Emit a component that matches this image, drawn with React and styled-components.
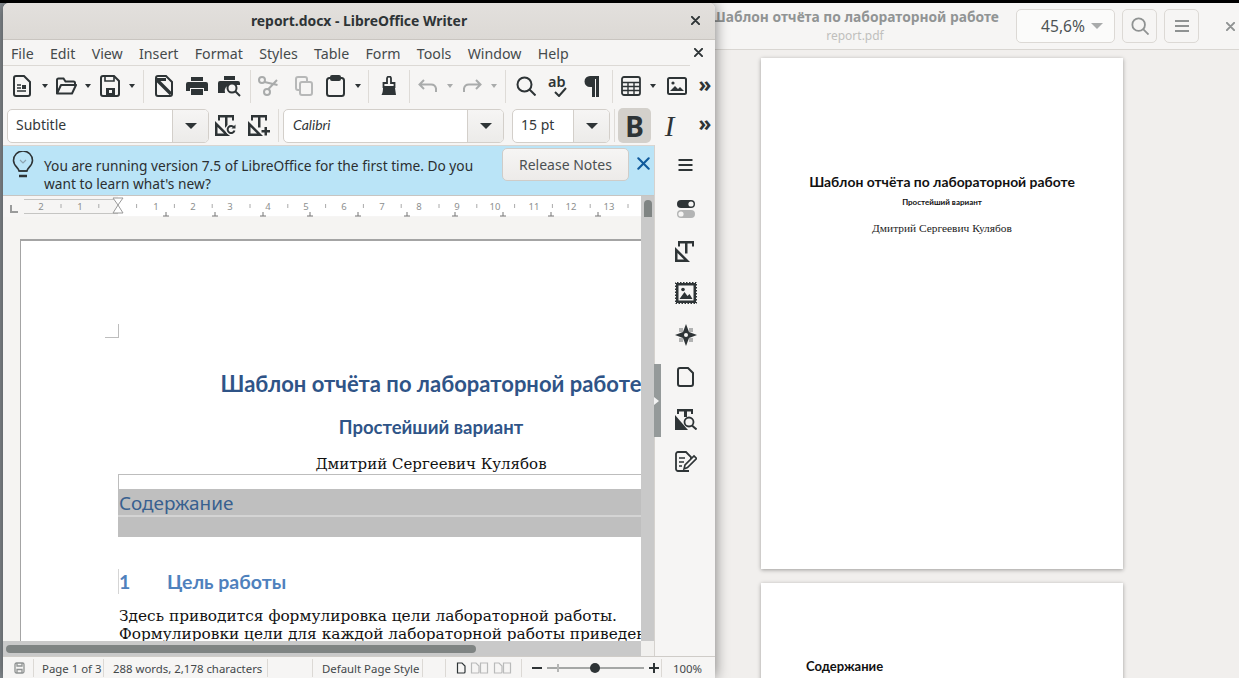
import React from "react"
import styled, { createGlobalStyle } from "styled-components"

const GlobalStyle = createGlobalStyle`
  html, body {
    margin: 0;
    padding: 0;
    height: 100%;
    background: #000;
    overflow: hidden;
  }
  * { box-sizing: border-box; }
`

const INK = "#2e3436"
const UI = `"Noto Sans", "Open Sans", sans-serif`
const SERIF = `"Liberation Serif", "DejaVu Serif", serif`
const SLAB = `"DejaVu Serif", "Liberation Serif", serif`
const HEAD = `Lato, "Noto Sans", sans-serif`

const Desktop = styled.div`
  position: relative;
  width: 1239px;
  height: 678px;
  overflow: hidden;
  background: linear-gradient(#000 3px, #8a9095 3px);
  font-family: ${UI};
`

/* ---------- pdf viewer (behind) ---------- */

const PdfWindow = styled.div`
  position: absolute;
  left: 700px;
  top: 3px;
  width: 539px;
  height: 675px;
  background: #f1efed;
  display: flex;
  flex-direction: column;
`
const PdfHeader = styled.div`
  height: 47px;
  flex: none;
  background: #f6f5f4;
  border-bottom: 1px solid #d9d6d2;
  display: flex;
  align-items: center;
  padding-left: 14px;
`
const PdfTitleBlock = styled.div`
  width: 282px;
  flex: none;
  margin-right: 20px;
  display: flex;
  flex-direction: column;
  align-items: center;
  white-space: nowrap;
`
const PdfTitle = styled.div`
  font-weight: 700;
  font-size: 13.8px;
  line-height: 18px;
  color: #919494;
`
const PdfSub = styled.div`
  font-size: 12px;
  line-height: 16px;
  margin-top: 2px;
  color: #c0bfbd;
`
const ZoomCombo = styled.div`
  width: 99px;
  height: 34px;
  flex: none;
  background: #fbfbfa;
  border: 1px solid #dcd9d5;
  border-radius: 5px;
  display: flex;
  align-items: center;
  justify-content: flex-end;
  gap: 6px;
  padding-right: 11px;
  font-size: 15.6px;
  color: #4e5355;
  margin-right: 7px;
`
const PdfButton = styled.div`
  width: 35px;
  height: 34px;
  flex: none;
  border: 1px solid #dcd9d5;
  border-radius: 5px;
  background: #f6f5f4;
  display: flex;
  align-items: center;
  justify-content: center;
  margin-right: 7px;
`
const PdfClose = styled.div`
  margin-left: 20px;
  display: flex;
`
const PdfPages = styled.div`
  flex: 1;
  display: flex;
  flex-direction: column;
  align-items: flex-start;
  gap: 14px;
  padding: 8px 0 0 61px;
  overflow: hidden;
`
const PdfPage = styled.div`
  width: 362px;
  height: 511px;
  flex: none;
  background: #fff;
  box-shadow: 0 1px 4px rgba(0, 0, 0, 0.35);
  display: flex;
  flex-direction: column;
  align-items: center;
  color: #111;
  padding-top: ${(p) => p.$top}px;
`
const PdfDocTitle = styled.div`
  font-family: ${HEAD};
  font-weight: 700;
  font-size: 13.9px;
  line-height: 18px;
  white-space: nowrap;
`
const PdfDocSub = styled.div`
  font-family: ${HEAD};
  font-weight: 700;
  font-size: 8px;
  line-height: 10px;
  margin-top: 6px;
  white-space: nowrap;
`
const PdfDocAuthor = styled.div`
  font-family: ${SERIF};
  font-size: 11.4px;
  line-height: 14px;
  margin-top: 14px;
  color: #222;
  white-space: nowrap;
`
const PdfTocTitle = styled.div`
  font-family: ${HEAD};
  font-weight: 700;
  font-size: 13px;
  line-height: 16px;
  align-self: flex-start;
  margin-left: 45px;
`

/* ---------- writer window ---------- */

const WriterWindow = styled.div`
  position: absolute;
  left: 3px;
  top: 3px;
  width: 712px;
  height: 675px;
  background: #f6f5f4;
  border-radius: 6px 6px 0 0;
  box-shadow: 0 0 14px rgba(0, 0, 0, 0.5);
  display: flex;
  flex-direction: column;
  overflow: hidden;
  color: ${INK};
`
const TitleBar = styled.div`
  height: 37px;
  flex: none;
  background: linear-gradient(#e3e0dd, #dcd9d5);
  border-bottom: 1px solid #c9c5c0;
  display: flex;
  align-items: center;
  justify-content: center;
  position: relative;
  font-weight: 700;
  font-size: 13.9px;
  padding-bottom: 2px;
`
const WindowClose = styled.div`
  position: absolute;
  right: 15px;
  top: 13px;
  display: flex;
`
const MenuBar = styled.div`
  height: 26px;
  flex: none;
  position: relative;
  display: flex;
  align-items: center;
  padding-left: 8px;
  gap: 16.3px;
  font-size: 14.2px;
  color: #454a4c;
  &::after {
    content: "";
    position: absolute;
    left: 0;
    bottom: 0;
    width: 687px;
    height: 1px;
    background: #dcd9d5;
  }
`
const MenuClose = styled.div`
  position: absolute;
  right: 12px;
  top: 8px;
  display: flex;
`
const ToolRow = styled.div`
  height: ${(p) => p.$h}px;
  flex: none;
  display: flex;
  align-items: center;
  padding-left: ${(p) => p.$pad}px;
`
const Cell = styled.div`
  width: ${(p) => p.$w}px;
  flex: none;
  display: flex;
  align-items: center;
  justify-content: center;
  margin-left: ${(p) => p.$ml || 0}px;
`
const Sep = styled.div`
  width: 1px;
  height: 33px;
  flex: none;
  background: #dedbd7;
  margin-left: ${(p) => p.$ml || 0}px;
`
const Drop = styled.div`
  width: 0;
  height: 0;
  border-left: 3.5px solid transparent;
  border-right: 3.5px solid transparent;
  border-top: 4px solid ${(p) => (p.$off ? "#a9abab" : INK)};
`
const BigDrop = styled(Drop)`
  border-left-width: 6px;
  border-right-width: 6px;
  border-top-width: 6px;
`
const Chevrons = styled.div`
  font-size: 21px;
  font-weight: 700;
  line-height: 17px;
  padding-bottom: 4px;
  color: ${INK};
`
const Combo = styled.div`
  width: ${(p) => p.$w}px;
  height: 34px;
  flex: none;
  margin-left: ${(p) => p.$ml || 0}px;
  display: flex;
  background: #fff;
  border: 1px solid #d3cfca;
  border-radius: 5px;
  overflow: hidden;
`
const ComboText = styled.div`
  flex: 1;
  display: flex;
  align-items: center;
  padding-left: ${(p) => p.$pad || 8}px;
  padding-bottom: 2px;
  font-size: 14px;
  font-style: ${(p) => (p.$italic ? "italic" : "normal")};
  font-family: ${(p) => (p.$italic ? "Lato, sans-serif" : UI)};
  color: #33383a;
`
const ComboBtn = styled.div`
  width: 36px;
  flex: none;
  background: linear-gradient(#f6f5f4, #ecebe9);
  border-left: 1px solid #d3cfca;
  display: flex;
  align-items: center;
  justify-content: center;
`
const BoldToggle = styled.div`
  width: 33px;
  height: 35px;
  flex: none;
  margin-left: 3px;
  background: #d3d0cb;
  border-radius: 5px;
  display: flex;
  align-items: center;
  justify-content: center;
  font-weight: 700;
  font-size: 28px;
  line-height: 28px;
`
const ItalicGlyph = styled.div`
  width: 37px;
  flex: none;
  text-align: center;
  font-family: ${SERIF};
  font-style: italic;
  font-size: 29px;
  line-height: 30px;
`
const WorkArea = styled.div`
  flex: 1;
  min-height: 0;
  display: flex;
`
const EditColumn = styled.div`
  width: 652px;
  flex: none;
  display: flex;
  flex-direction: column;
`
const InfoBar = styled.div`
  height: 51px;
  flex: none;
  background: #bae4f7;
  border-top: 1px solid #d9d6d2;
  border-bottom: 1px solid #c7c5c2;
  display: flex;
  align-items: flex-start;
  position: relative;
  padding: 5px 0 0 9px;
`
const InfoText = styled.div`
  width: 450px;
  margin: 6px 0 0 10px;
  font-size: 13.72px;
  line-height: 18px;
  color: #2b2f31;
`
const ReleaseBtn = styled.div`
  width: 127px;
  height: 33px;
  background: linear-gradient(#f6f5f4, #edebe9);
  border: 1px solid #cfccc8;
  border-radius: 5px;
  display: flex;
  align-items: center;
  justify-content: center;
  font-size: 14px;
  color: #4c5153;
  position: absolute;
  left: 499px;
  top: 2px;
`
const InfoClose = styled.div`
  position: absolute;
  right: 5px;
  top: 11px;
  display: flex;
`
const RulerRow = styled.div`
  height: 21px;
  flex: none;
  display: flex;
`
const RulerStrip = styled.div`
  width: 638px;
  flex: none;
  background: #f6f5f4;
  display: flex;
`
const ScrollTrack = styled.div`
  width: 14px;
  flex: none;
  background: #c9c9c9;
  position: relative;
`
const VThumb = styled.div`
  position: absolute;
  left: 3px;
  top: 4px;
  width: 8px;
  height: 51px;
  background: #7f8483;
  border-radius: 4px;
`
const DocRow = styled.div`
  flex: 1;
  min-height: 0;
  display: flex;
`
const DocPane = styled.div`
  width: 638px;
  flex: none;
  background: #f5f4f2;
  padding: 22px 0 0 17px;
  overflow: hidden;
`
const Page = styled.div`
  width: 820px;
  height: 900px;
  background: #fff;
  border-left: 1px solid #a4a4a4;
  border-top: 2px solid #a4a4a4;
  padding: 0 0 0 97px;
  position: relative;
`
const CropMark = styled.div`
  position: absolute;
  left: 84px;
  top: 83px;
  width: 14px;
  height: 14px;
  border-right: 1px solid #bdbdbd;
  border-bottom: 1px solid #bdbdbd;
`
const TextBlock = styled.div`
  width: 626px;
  padding-top: 129px;
`
const DocTitle = styled.div`
  font-family: ${HEAD};
  font-weight: 700;
  font-size: 22px;
  line-height: 28px;
  color: #2f5487;
  text-align: center;
  white-space: nowrap;
`
const DocSubtitle = styled.div`
  font-family: ${HEAD};
  font-weight: 700;
  font-size: 18.5px;
  line-height: 22px;
  color: #2f5487;
  text-align: center;
  margin-top: 18px;
`
const DocAuthor = styled.div`
  font-family: ${SLAB};
  font-size: 15px;
  line-height: 20px;
  color: #111;
  text-align: center;
  margin-top: 16px;
  white-space: nowrap;
`
const TocBox = styled.div`
  width: 723px;
  border-top: 1px solid #bdbdbd;
  border-left: 1px solid #bdbdbd;
  padding-top: 14px;
`
const TocBand = styled.div`
  height: ${(p) => p.$h}px;
  background: #bfbfbf;
  border-bottom: ${(p) => (p.$rule ? "2px solid #d4d4d4" : "none")};
  margin-left: -1px;
  padding-left: 1px;
  font-size: 18.9px;
  line-height: 28px;
  color: #38608f;
`
const SectionHead = styled.div`
  margin-top: 32px;
  height: 25px;
  border-left: 1px solid #d5d5d5;
  display: flex;
  align-items: center;
  font-family: ${HEAD};
  font-weight: 700;
  font-size: 19.5px;
  color: #4f81bd;
  white-space: nowrap;
`
const SectionNum = styled.span`
  width: 48px;
  flex: none;
`
const BodyText = styled.div`
  margin-top: 13px;
  padding-left: 1px;
  font-family: ${SLAB};
  font-size: 15.35px;
  line-height: 18px;
  color: #111;
  white-space: nowrap;
`
const HScrollRow = styled.div`
  height: 15px;
  flex: none;
  display: flex;
`
const HTrack = styled.div`
  width: 638px;
  flex: none;
  background: #c9c9c9;
  padding: 4px 0 0 3px;
`
const HThumb = styled.div`
  width: 470px;
  height: 8px;
  background: #7f8483;
  border-radius: 4px;
`
const ScrollCorner = styled.div`
  flex: 1;
  background: #f1f0ee;
`
const SideBar = styled.div`
  width: 60px;
  flex: none;
  border-left: 1px solid #d5d2ce;
  background: #f6f5f4;
  position: relative;
  display: flex;
  flex-direction: column;
  align-items: center;
  padding: 2px 0 0 2px;
  margin-left: -1px;
`
const DeckSlot = styled.div`
  width: 36px;
  height: 36px;
  flex: none;
  display: flex;
  align-items: center;
  justify-content: center;
  margin-bottom: ${(p) => p.$mb || 6}px;
`
const DeckHandle = styled.div`
  position: absolute;
  left: -1px;
  top: 219px;
  width: 7px;
  height: 73px;
  background: #959a9a;
  display: flex;
  align-items: center;
  &::after {
    content: "";
    border-left: 5px solid #f2f2f2;
    border-top: 4px solid transparent;
    border-bottom: 4px solid transparent;
  }
`
const StatusBar = styled.div`
  height: 22px;
  flex: none;
  border-top: 1px solid #cfccc8;
  padding-top: 1px;
  display: flex;
  align-items: center;
  font-size: 11.4px;
  color: #43484a;
  white-space: nowrap;
`
const StatusCell = styled.div`
  width: ${(p) => p.$w}px;
  height: 18px;
  flex: none;
  display: flex;
  align-items: center;
  justify-content: ${(p) => p.$justify || "flex-start"};
  gap: ${(p) => p.$gap || 0}px;
  padding-left: ${(p) => p.$pad || 0}px;
  border-right: ${(p) => (p.$plain ? "none" : "1px solid #dcd9d5")};
`
const SliderTrack = styled.div`
  width: 97px;
  height: 2px;
  flex: none;
  background: #a5a7a6;
  position: relative;
`
const SliderTick = styled.div`
  position: absolute;
  left: 10px;
  top: -3px;
  width: 2px;
  height: 8px;
  background: #b5b6b5;
`
const SliderKnob = styled.div`
  position: absolute;
  left: 43px;
  top: -4px;
  width: 10px;
  height: 10px;
  border-radius: 50%;
  background: ${INK};
`
const SpellLabel = styled.div`
  position: relative;
  width: 20px;
  height: 24px;
  font-weight: 600;
  font-size: 14.5px;
  line-height: 14px;
  text-align: left;
  & > svg {
    position: absolute;
    left: 6px;
    bottom: 1px;
  }
`

/* ---------- icons ---------- */

const Svg = ({ w = 24, h = 24, children, ...rest }) => (
  <svg width={w} height={h} viewBox={`0 0 ${w} ${h}`} fill="none" stroke={INK} strokeWidth="2" {...rest}>
    {children}
  </svg>
)

const CloseIcon = ({ size = 9, color = INK, weight = 2.2 }) => (
  <svg width={size} height={size} viewBox="0 0 10 10" stroke={color} strokeWidth={weight} strokeLinecap="round">
    <path d="M1 1l8 8M9 1l-8 8" />
  </svg>
)
const NewDocIcon = () => (
  <Svg w={18} h={22}>
    <path d="M3 1h8l6 6v12a2 2 0 0 1-2 2H3a2 2 0 0 1-2-2V3a2 2 0 0 1 2-2z" />
    <path d="M4 10h4M4 13h4M4 16h9" strokeWidth="1.3" />
    <rect x="9" y="10" width="4" height="4" fill={INK} stroke="none" />
  </Svg>
)
const OpenIcon = () => (
  <Svg w={22} h={18}>
    <path d="M2 16V3a1.5 1.5 0 0 1 1.5-1.5h5l2 3h8a1.5 1.5 0 0 1 1.5 1.5v2" />
    <path d="M2 16.5h15l4-8.5H6z" strokeLinejoin="round" />
  </Svg>
)
const SaveIcon = () => (
  <Svg w={20} h={22}>
    <path d="M3 1h11l5 5v13a2 2 0 0 1-2 2H3a2 2 0 0 1-2-2V3a2 2 0 0 1 2-2z" />
    <path d="M5 1v5h9V1" strokeWidth="1.6" />
    <rect x="6" y="13" width="9" height="8" fill={INK} stroke="none" />
    <rect x="9" y="15" width="3" height="3" fill="#f6f5f4" stroke="none" />
  </Svg>
)
const ExportIcon = () => (
  <Svg w={18} h={22}>
    <path d="M3 1h8l6 6v12a2 2 0 0 1-2 2H3a2 2 0 0 1-2-2V3a2 2 0 0 1 2-2z" />
    <path d="M2 3h9v3H2z" fill={INK} stroke="none" />
    <path d="M2 5l14 14" strokeWidth="3.4" />
  </Svg>
)
const PrintIcon = () => (
  <Svg w={22} h={20} stroke="none">
    <path d="M5 1h12v4H5z" fill={INK} />
    <path d="M2 6h18a2 2 0 0 1 2 2v7h-4v-3H4v3H0V8a2 2 0 0 1 2-2z" fill={INK} />
    <path d="M5 13h12v6H5z" fill={INK} />
  </Svg>
)
const PreviewIcon = () => (
  <Svg w={24} h={22} stroke="none">
    <path d="M6 1h11v4H6z" fill={INK} />
    <path d="M2 6h18a2 2 0 0 1 2 2v2H12a6 6 0 0 0-5 8H0V8a2 2 0 0 1 2-2z" fill={INK} />
    <circle cx="14" cy="13" r="4.5" stroke={INK} strokeWidth="2" fill="#f6f5f4" />
    <path d="M17 16l5 5" stroke={INK} strokeWidth="2" />
  </Svg>
)
const CutIcon = () => (
  <Svg w={22} h={22} stroke="#a9abab">
    <circle cx="5" cy="5" r="3" />
    <circle cx="10" cy="17" r="3" />
    <path d="M7.5 7l13 3M11 14.5L20 5" />
  </Svg>
)
const CopyIcon = () => (
  <Svg w={18} h={20} stroke="#b7b8b8">
    <rect x="1" y="1" width="11" height="13" rx="2" />
    <rect x="5" y="6" width="12" height="13" rx="2" fill="#f6f5f4" />
  </Svg>
)
const PasteIcon = () => (
  <Svg w={19} h={22}>
    <rect x="1" y="3" width="17" height="18" rx="2.5" />
    <rect x="5" y="1" width="9" height="4" rx="1" fill={INK} />
  </Svg>
)
const BrushIcon = () => (
  <Svg w={16} h={20}>
    <path d="M6 7V2.500a2 2 0 0 1 4 0V7h3.500v4h-11V7z" strokeWidth="1.8" />
    <path d="M2 12h12l1 7H0.500c1-2 1.500-4 1.500-7z" fill={INK} stroke="none" />
  </Svg>
)
const UndoIcon = ({ flip }) => (
  <svg width="20" height="14" viewBox="0 0 20 14" fill="none" stroke="#a9abab" strokeWidth="2" style={flip ? { transform: "scaleX(-1)" } : undefined}>
    <path d="M6 1L1.500 5.500 6 10M2 5.500h11a5 5 0 0 1 5 4V13" />
  </svg>
)
const SearchIcon = ({ size = 20, color = INK, weight = 2 }) => (
  <svg width={size} height={size} viewBox="0 0 20 20" fill="none" stroke={color} strokeWidth={weight}>
    <circle cx="8.5" cy="8.5" r="7" />
    <path d="M13.5 13.5L19.5 19.5" />
  </svg>
)
const PilcrowIcon = () => (
  <Svg w={15} h={21} stroke="none">
    <path d="M6 0h9v21h-3V3h-1v18H8V11H6A5.5 5.5 0 0 1 6 0z" fill={INK} />
  </Svg>
)
const TableIcon = () => (
  <Svg w={20} h={20} strokeWidth="1.4">
    <rect x="1" y="1" width="18" height="18" rx="2" strokeWidth="1.8" />
    <path d="M1 6.500h18M1 10.500h18M1 14.500h18M7 6v13M13 6v13" />
  </Svg>
)
const ImageIcon = () => (
  <Svg w={20} h={18}>
    <rect x="1" y="1" width="18" height="16" rx="1.5" />
    <circle cx="6" cy="6" r="1.6" fill={INK} stroke="none" />
    <path d="M3 14l5-5 3 3 2-2 4 4z" fill={INK} stroke="none" />
  </Svg>
)
const StyleIcon = ({ badge }) => (
  <Svg w={22} h={21} stroke="none">
    <path d="M3 0h16v5.500h-2V2.500h-4.500v10h-2.500v-10H5v3H3z" fill={INK} />
    <path d="M0 6l15 15H0z" fill={INK} />
    <path d="M2.500 12l6.500 6.500H2.500z" fill="#f6f5f4" />
    {badge === "plus" ? <path d="M16.500 12h2.500v3h3v2.500h-3v3h-2.500v-3h-3V15h3z" fill={INK} /> : null}
    {badge === "update" ? (
      <g>
        <circle cx="16" cy="14.500" r="5.500" fill="#f6f5f4" />
        <path d="M19 12.500a3.500 3.500 0 1 0 .5 3" fill="none" stroke={INK} strokeWidth="2" />
        <path d="M20.500 9.500v4h-4z" fill={INK} />
      </g>
    ) : null}
  </Svg>
)
const HamburgerIcon = ({ color = INK, w = 14 }) => (
  <svg width={w} height="12" viewBox="0 0 14 12" stroke={color} strokeWidth="2">
    <path d="M0 1h14M0 6h14M0 11h14" />
  </svg>
)
const ToggleIcon = () => (
  <Svg w={18} h={18} stroke="none">
    <rect x="0" y="0" width="18" height="8" rx="4" fill={INK} />
    <circle cx="14" cy="4" r="2.6" fill="#f6f5f4" />
    <rect x="0" y="10" width="18" height="8" rx="4" fill="#b3b4b4" />
    <circle cx="4" cy="14" r="2.6" fill="#f6f5f4" />
  </Svg>
)
const FrameImageIcon = () => (
  <Svg w={22} h={22} stroke="none">
    <rect x="0" y="0" width="22" height="22" fill={INK} />
    <rect x="3.500" y="3.500" width="15" height="15" fill="#f6f5f4" />
    <rect x="0.500" y="0.500" width="21" height="21" stroke="#f6f5f4" strokeWidth="1" strokeDasharray="1.500 1.500" />
    <path d="M4.500 17l5-7 3 4 2-2 3 5z" fill={INK} />
    <circle cx="8" cy="7.500" r="1.800" fill={INK} />
  </Svg>
)
const NavigatorIcon = () => (
  <Svg w={22} h={22} stroke="none">
    <path d="M4 4h4v4H4zM14 4h4v4h-4zM4 14h4v4H4zM14 14h4v4h-4z" fill="#b1b2b2" />
    <path d="M11 0l3 8 8 3-8 3-3 8-3-8-8-3 8-3z" fill={INK} />
    <circle cx="11" cy="11" r="2" fill="#f6f5f4" />
  </Svg>
)
const PageIcon = () => (
  <Svg w={17} h={20}>
    <path d="M3 1h8l5 5v11a2 2 0 0 1-2 2H3a2 2 0 0 1-2-2V3a2 2 0 0 1 2-2z" />
  </Svg>
)
const StyleSearchIcon = () => (
  <Svg w={22} h={21} stroke="none">
    <path d="M2 0h16v5h-2V2.500h-4V8h-3V2.500H4V5H2z" fill={INK} />
    <path d="M0 6l13 15H0z" fill={INK} />
    <circle cx="14" cy="13" r="4.500" fill="#f6f5f4" stroke={INK} strokeWidth="1.8" />
    <path d="M17 16.500l4.500 4" stroke={INK} strokeWidth="2" />
  </Svg>
)
const NotesIcon = () => (
  <Svg w={22} h={21}>
    <path d="M14 20H3a2 2 0 0 1-2-2V3a2 2 0 0 1 2-2h8l5 5v2" strokeWidth="1.8" />
    <path d="M4 7h6M4 11h5M4 15h3" strokeWidth="1.5" />
    <path d="M9 18l1-4 9-9 2.500 2.500-9 9z" strokeWidth="1.6" />
  </Svg>
)
const LightbulbIcon = () => (
  <svg width="22" height="27" viewBox="0 0 22 27" fill="none" stroke={INK} strokeWidth="1.6">
    <path d="M7 20c0-3-5.500-5-5.500-10.500a9.500 9.500 0 0 1 19 0C20.500 15 15 17 15 20z" />
    <path d="M7 20h8" />
    <path d="M7 25h8" strokeWidth="2.400" />
    <path d="M8 9l3 3 3-3" stroke="#8ba3b0" strokeWidth="1.200" />
  </svg>
)
const SmallSaveIcon = () => (
  <svg width="11" height="12" viewBox="0 0 11 12" fill="none" stroke="#8f9292" strokeWidth="1.3">
    <rect x="1" y="1" width="9" height="10" rx="1.5" />
    <path d="M3 1v3h5V1M3 11V7.500h5V11" />
  </svg>
)
const PageLayoutIcon = ({ n, dark }) => (
  <svg width={n === 1 ? 10 : 19} height="12" viewBox={n === 1 ? "0 0 10 12" : "0 0 19 12"} fill="none" stroke={dark ? INK : "#b9baba"} strokeWidth="1.2">
    <path d="M1.500 1h4.500l3 3v6a1 1 0 0 1-1 1h-6.500z" />
    {n === 2 ? <path d="M10.500 1h7v10h-7z" /> : null}
  </svg>
)

const TICK_NUMBERS = [
  [41, "2"], [80, "1"], [156, "1"], [193, "2"], [230, "3"], [268, "4"], [306, "5"], [344, "6"],
  [382, "7"], [419, "8"], [457, "9"], [495, "10"], [534, "11"], [571, "12"], [609, "13"],
]
const TAB_STOPS = [166, 215, 263, 310, 358, 407, 455, 503, 551, 598]

// drawn in page coordinates, the viewBox starts at the window's left edge
const Ruler = () => {
  const minor = []
  for (let x = 61; x < 640; x += 37.8) {
    if (x > 128 || x < 110) minor.push(x)
  }
  return (
    <svg width="638" height="21" viewBox="3 0 638 21">
      <rect x="24" y="0" width="617" height="20" fill="#fff" />
      <rect x="24" y="0" width="94" height="20" fill="#f6f5f4" />
      <path d="M24 3.500h94M24 17.500h94" stroke="#c5c5c3" />
      <path d="M11 9v7h7" stroke="#9a9b9b" strokeWidth="2" fill="none" />
      {minor.map((x) => (
        <path key={x} d={`M${x} 8v4`} stroke="#aaa" />
      ))}
      {TICK_NUMBERS.map(([x, t]) => (
        <text key={x} x={x} y="14" textAnchor="middle" fontSize="9.500" fontFamily={UI} fill="#8d8f8f">
          {t}
        </text>
      ))}
      {TAB_STOPS.map((x) => (
        <path key={x} d={`M${x - 3} 20h6M${x} 16v4`} stroke="#777" fill="none" />
      ))}
      <path d="M113 2h10l-5 7 5 8h-10l5-8z" fill="#fff" stroke="#999" />
    </svg>
  )
}

const MENU = ["File", "Edit", "View", "Insert", "Format", "Styles", "Table", "Form", "Tools", "Window", "Help"]

const App = () => {
  return (
    <Desktop>
      <GlobalStyle />
      <PdfWindow>
        <PdfHeader>
          <PdfTitleBlock>
            <PdfTitle>Шаблон отчёта по лабораторной работе</PdfTitle>
            <PdfSub>report.pdf</PdfSub>
          </PdfTitleBlock>
          <ZoomCombo>
            45,6%
            <BigDrop $off />
          </ZoomCombo>
          <PdfButton>
            <SearchIcon size={18} color="#8f9292" />
          </PdfButton>
          <PdfButton>
            <HamburgerIcon color="#8f9292" />
          </PdfButton>
          <PdfClose>
            <CloseIcon color="#8f9292" />
          </PdfClose>
        </PdfHeader>
        <PdfPages>
          <PdfPage $top={115}>
            <PdfDocTitle>Шаблон отчёта по лабораторной работе</PdfDocTitle>
            <PdfDocSub>Простейший вариант</PdfDocSub>
            <PdfDocAuthor>Дмитрий Сергеевич Кулябов</PdfDocAuthor>
          </PdfPage>
          <PdfPage $top={75}>
            <PdfTocTitle>Содержание</PdfTocTitle>
          </PdfPage>
        </PdfPages>
      </PdfWindow>

      <WriterWindow>
        <TitleBar>
          report.docx - LibreOffice Writer
          <WindowClose>
            <CloseIcon />
          </WindowClose>
        </TitleBar>
        <MenuBar>
          {MENU.map((m) => (
            <span key={m}>{m}</span>
          ))}
          <MenuClose>
            <CloseIcon />
          </MenuClose>
        </MenuBar>

        <ToolRow $h={40} $pad={2}>
          <Cell $w={34}><NewDocIcon /></Cell>
          <Cell $w={11}><Drop /></Cell>
          <Cell $w={32}><OpenIcon /></Cell>
          <Cell $w={12}><Drop /></Cell>
          <Cell $w={32}><SaveIcon /></Cell>
          <Cell $w={12}><Drop /></Cell>
          <Sep $ml={5} />
          <Cell $w={40}><ExportIcon /></Cell>
          <Cell $w={26}><PrintIcon /></Cell>
          <Cell $w={40}><PreviewIcon /></Cell>
          <Sep />
          <Cell $w={34}><CutIcon /></Cell>
          <Cell $w={38}><CopyIcon /></Cell>
          <Cell $w={24}><PasteIcon /></Cell>
          <Cell $w={21}><Drop /></Cell>
          <Sep />
          <Cell $w={40}><BrushIcon /></Cell>
          <Sep />
          <Cell $w={36}><UndoIcon /></Cell>
          <Cell $w={8}><Drop $off /></Cell>
          <Cell $w={36}><UndoIcon flip /></Cell>
          <Cell $w={8}><Drop $off /></Cell>
          <Sep $ml={7} />
          <Cell $w={40}><SearchIcon /></Cell>
          <Cell $w={24}>
            <SpellLabel>
              ab
              <svg width="13" height="10" viewBox="0 0 13 10" fill="none" stroke={INK} strokeWidth="2">
                <path d="M1 5l4 4 7-8" />
              </svg>
            </SpellLabel>
          </Cell>
          <Cell $w={42}><PilcrowIcon /></Cell>
          <Sep />
          <Cell $w={36}><TableIcon /></Cell>
          <Cell $w={8}><Drop /></Cell>
          <Cell $w={40}><ImageIcon /></Cell>
          <Cell $w={16}><Chevrons>»</Chevrons></Cell>
        </ToolRow>

        <ToolRow $h={39} $pad={4}>
          <Combo $w={202}>
            <ComboText>Subtitle</ComboText>
            <ComboBtn><BigDrop /></ComboBtn>
          </Combo>
          <Cell $w={34}><StyleIcon badge="update" /></Cell>
          <Cell $w={32}><StyleIcon badge="plus" /></Cell>
          <Sep $ml={3} />
          <Combo $w={221} $ml={4}>
            <ComboText $italic $pad={9}>Calibri</ComboText>
            <ComboBtn><BigDrop /></ComboBtn>
          </Combo>
          <Combo $w={98} $ml={8}>
            <ComboText>15 pt</ComboText>
            <ComboBtn><BigDrop /></ComboBtn>
          </Combo>
          <Sep $ml={4} />
          <BoldToggle>B</BoldToggle>
          <ItalicGlyph>I</ItalicGlyph>
          <Cell $w={18} $ml={8}><Chevrons>»</Chevrons></Cell>
        </ToolRow>

        <WorkArea>
          <EditColumn>
            <InfoBar>
              <LightbulbIcon />
              <InfoText>You are running version 7.5 of LibreOffice for the first time. Do you want to learn what's new?</InfoText>
              <ReleaseBtn>Release Notes</ReleaseBtn>
              <InfoClose>
                <CloseIcon size={13} color="#0f5a9c" weight={1.6} />
              </InfoClose>
            </InfoBar>
            <RulerRow>
              <RulerStrip><Ruler /></RulerStrip>
              <ScrollTrack><VThumb /></ScrollTrack>
            </RulerRow>
            <DocRow>
              <DocPane>
                <Page>
                  <CropMark />
                  <TextBlock>
                    <DocTitle>Шаблон отчёта по лабораторной работе</DocTitle>
                    <DocSubtitle>Простейший вариант</DocSubtitle>
                    <DocAuthor>Дмитрий Сергеевич Кулябов</DocAuthor>
                    <TocBox>
                      <TocBand $h={28} $rule>Содержание</TocBand>
                      <TocBand $h={20} />
                    </TocBox>
                    <SectionHead>
                      <SectionNum>1</SectionNum>
                      Цель работы
                    </SectionHead>
                    <BodyText>
                      Здесь приводится формулировка цели лабораторной работы.
                      <br />
                      Формулировки цели для каждой лабораторной работы приведены
                    </BodyText>
                  </TextBlock>
                </Page>
              </DocPane>
              <ScrollTrack />
            </DocRow>
            <HScrollRow>
              <HTrack><HThumb /></HTrack>
              <ScrollCorner />
            </HScrollRow>
          </EditColumn>
          <SideBar>
            <DeckHandle />
            <DeckSlot $mb={8}><HamburgerIcon color={INK} w={15} /></DeckSlot>
            <DeckSlot><ToggleIcon /></DeckSlot>
            <DeckSlot><StyleIcon /></DeckSlot>
            <DeckSlot><FrameImageIcon /></DeckSlot>
            <DeckSlot><NavigatorIcon /></DeckSlot>
            <DeckSlot><PageIcon /></DeckSlot>
            <DeckSlot><StyleSearchIcon /></DeckSlot>
            <DeckSlot><NotesIcon /></DeckSlot>
          </SideBar>
        </WorkArea>

        <StatusBar>
          <StatusCell $w={31} $justify="center" $pad={2}><SmallSaveIcon /></StatusCell>
          <StatusCell $w={70} $pad={8}>Page 1 of 3</StatusCell>
          <StatusCell $w={164} $pad={9}>288 words, 2,178 characters</StatusCell>
          <StatusCell $w={45} />
          <StatusCell $w={110} $pad={9}>Default Page Style</StatusCell>
          <StatusCell $w={23} />
          <StatusCell $w={76} $justify="center" $gap={4}>
            <PageLayoutIcon n={1} dark />
            <PageLayoutIcon n={2} />
            <PageLayoutIcon n={2} />
          </StatusCell>
          <StatusCell $w={140} $pad={10} $gap={5}>
            <svg width="10" height="2" viewBox="0 0 10 2"><path d="M0 1h10" stroke={INK} strokeWidth="2" /></svg>
            <SliderTrack>
              <SliderTick />
              <SliderKnob />
            </SliderTrack>
            <svg width="10" height="10" viewBox="0 0 10 10"><path d="M0 5h10M5 0v10" stroke={INK} strokeWidth="2" /></svg>
          </StatusCell>
          <StatusCell $plain $w={50} $pad={11}>100%</StatusCell>
        </StatusBar>
      </WriterWindow>
    </Desktop>
  )
}

export default App
